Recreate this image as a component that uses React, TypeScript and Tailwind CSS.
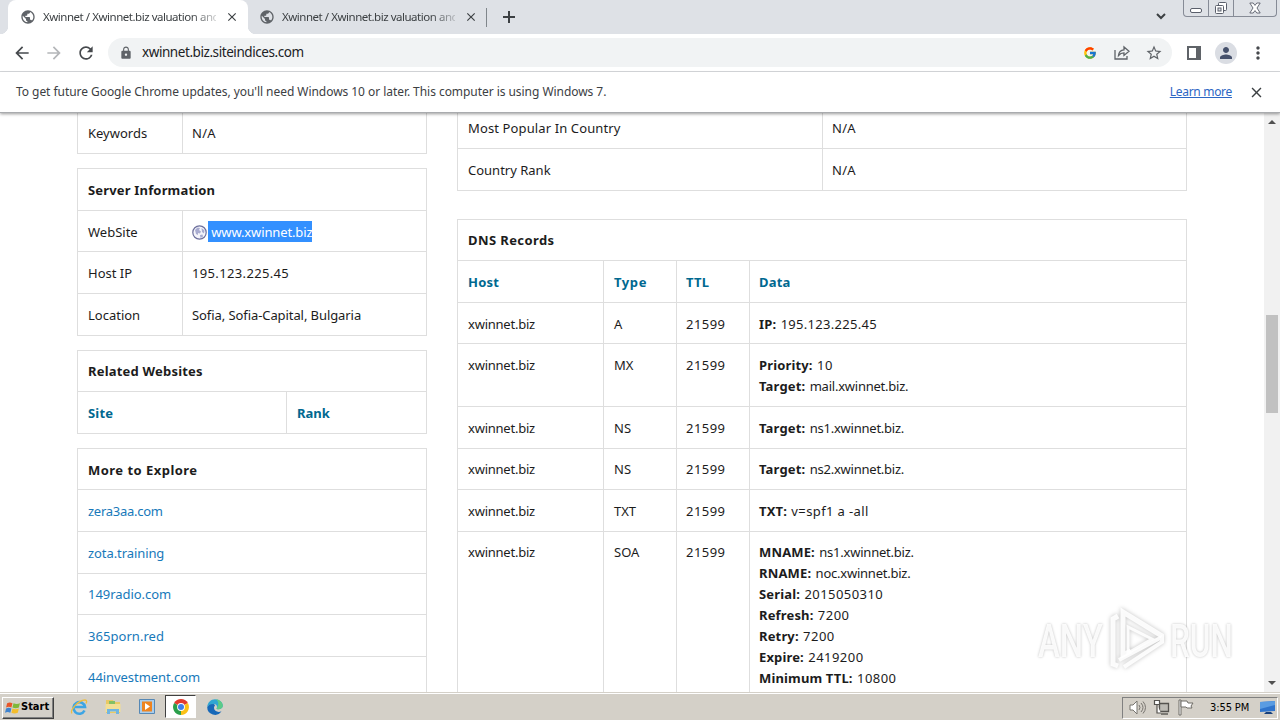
import type { ReactNode } from "react";
import clsx from "clsx";
import {
  MdArrowBack,
  MdArrowForward,
  MdClose,
  MdLock,
  MdMoreVert,
  MdPerson,
  MdPublic,
  MdRefresh,
  MdStarBorder,
} from "react-icons/md";
import { FcGoogle } from "react-icons/fc";

const TAB_TITLE = "Xwinnet / Xwinnet.biz valuation and";

// last row of each list runs below the fold
const EXPLORE = [
  { site: "zera3aa.com", row: "h-[42px] pt-[11px] tracking-[-0.27px]" },
  { site: "zota.training", row: "h-[42px] pt-[11px] tracking-[-0.08px]" },
  { site: "149radio.com", row: "h-[41px] pt-[10px] tracking-[-0.05px]" },
  { site: "365porn.red", row: "h-[42px] pt-[11px] tracking-[0.05px]" },
  { site: "44investment.com", row: "h-[42px] pt-[10px] tracking-[-0.06px]" },
];

const SERVER = [
  { label: "Host IP", value: "195.123.225.45", track: "tracking-[0.35px]" },
  { label: "Location", value: "Sofia, Sofia-Capital, Bulgaria", track: "tracking-[-0.08px]" },
];

const DIGITS = "tracking-[0.45px]";
const DOMAIN = "tracking-[-0.23px]";

const DNS = [
  { type: "A", h: "h-[41px]", pad: "pt-[11px]", data: [["IP:", "195.123.225.45", "tracking-[0.3px]"]] },
  {
    type: "MX",
    h: "h-[63px]",
    pad: "pt-[11px]",
    data: [
      ["Priority:", "10", DIGITS],
      ["Target:", "mail.xwinnet.biz.", DOMAIN],
    ],
  },
  { type: "NS", h: "h-[42px]", pad: "pt-[11px]", data: [["Target:", "ns1.xwinnet.biz.", DOMAIN]] },
  { type: "NS", h: "h-[41px]", pad: "pt-[10px]", data: [["Target:", "ns2.xwinnet.biz.", DOMAIN]] },
  { type: "TXT", h: "h-[42px]", pad: "pt-[11px]", data: [["TXT:", "v=spf1 a -all", "tracking-[0.38px]"]] },
  {
    type: "SOA",
    h: "h-[168px]",
    pad: "pt-[10px]",
    data: [
      ["MNAME:", "ns1.xwinnet.biz.", DOMAIN],
      ["RNAME:", "noc.xwinnet.biz.", DOMAIN],
      ["Serial:", "2015050310", DIGITS],
      ["Refresh:", "7200", DIGITS],
      ["Retry:", "7200", DIGITS],
      ["Expire:", "2419200", DIGITS],
      ["Minimum TTL:", "10800", DIGITS],
    ],
  },
];

function Tab({ active }: { active?: boolean }) {
  return (
    <div
      className={clsx(
        "relative flex h-full shrink-0 items-center",
        active ? "w-[240px] rounded-t-lg bg-white pl-3" : "w-[238px] pl-[11px]"
      )}
    >
      {active && (
        <>
          <span className="absolute -left-2 bottom-0 size-2 bg-[radial-gradient(circle_at_0_0,transparent_8px,white_8.5px)]" />
          <span className="absolute -right-2 bottom-0 size-2 bg-[radial-gradient(circle_at_100%_0,transparent_8px,white_8.5px)]" />
        </>
      )}
      <MdPublic className="size-4 text-[#5f6368]" />
      <span className="ml-[7px] w-[173px] whitespace-nowrap text-[11.5px] tracking-[-0.47px] text-[#3c4043] [mask-image:linear-gradient(to_right,black_148px,#0004_172px)]">
        {TAB_TITLE}
      </span>
      <MdClose className="ml-[9px] size-[14px] text-[#3c4043]" stroke="currentColor" />
    </div>
  );
}

function TabStrip() {
  return (
    <div className="relative flex h-[34px] bg-[#dee1e6] pl-2">
      <Tab active />
      <Tab />
      <div className="mt-2 h-[19px] w-px bg-[#80868b]" />
      <svg className="ml-4 mt-[11px] size-3" viewBox="0 0 12 12">
        <path d="M6 0v12M0 6h12" stroke="#3c4043" strokeWidth="2" />
      </svg>
      <svg className="ml-auto mr-[114px] mt-[13px] h-[7px] w-[10px]" viewBox="0 0 10 7">
        <path d="M1 1l4 4 4-4" fill="none" stroke="#3c4043" strokeWidth="2" />
      </svg>
      <div className="absolute right-[3px] top-0 flex h-[17px] w-[94px] rounded-b border border-t-0 border-[#868b96] text-[#5a5f6b]">
        <div className="w-[25px] border-r border-[#868b96] pl-[6px] pt-[8px]">
          <div className="h-[5px] w-3 rounded-[2px] border border-current bg-white" />
        </div>
        <div className="w-[25px] border-r border-[#868b96] pl-[5px] pt-[1px]">
          <svg className="size-[14px]" viewBox="0 0 14 14" fill="#fff" stroke="currentColor">
            <rect x="4.5" y="1.5" width="8" height="8" rx="1" />
            <rect x="1.5" y="4.5" width="8" height="8" rx="1" />
            <rect x="4" y="7" width="3" height="3" fill="#dee1e6" />
          </svg>
        </div>
        <svg className="ml-[15px] mt-[2px] h-[12px] w-[12px]" viewBox="0 0 12 12">
          <path
            d="M.8 1h3.4L6 3.4 7.800 1h3.400L8 6l3.200 5H7.800L6 8.600 4.200 11H.8L4 6z"
            fill="#fff"
            stroke="#5a5f6b"
            strokeWidth=".9"
          />
        </svg>
      </div>
    </div>
  );
}

function Toolbar() {
  return (
    <div className="flex h-[38px] items-center border-b border-[#d5d7da] bg-white pl-3 text-[#5f6368]">
      <MdArrowBack className="size-5 text-[#46494d]" />
      <MdArrowForward className="ml-3 size-5 text-[#b4b6b9]" />
      <MdRefresh className="ml-3 size-5 text-[#46494d]" />
      <div className="ml-3 flex h-[29px] w-[1064px] items-center rounded-full bg-[#f1f3f4] pl-[11px] pr-[9px]">
        <MdLock className="size-[14px]" />
        <span className="ml-[9px] text-[13.5px] tracking-[-0.43px] text-[#202124]">
          xwinnet.biz.siteindices.com
        </span>
        <FcGoogle className="ml-auto size-[14px]" />
        <svg className="ml-[17px] h-[15px] w-4" viewBox="0 0 16 15" fill="none" stroke="currentColor" strokeWidth="1.300">
          <path d="M1 5v9h12v-3" />
          <path d="M4.500 10.500c.3-3.500 2.200-5.500 5.500-5.700V2l5 4.200-5 4.200V7.800c-2.500 0-4 .8-5.500 2.700z" />
        </svg>
        <MdStarBorder className="ml-[15px] size-[18px]" />
      </div>
      <svg className="ml-[15px] size-[14px]" viewBox="0 0 14 14">
        <rect x="1" y="1" width="12" height="12" fill="none" stroke="#5f6368" strokeWidth="2" />
        <path d="M9 1h4v12H9z" fill="#5f6368" />
      </svg>
      <div className="ml-[14px] flex size-[22px] items-center justify-center rounded-full bg-[#dadde3]">
        <MdPerson className="size-[18px] text-[#45506b]" />
      </div>
      <MdMoreVert className="ml-[11px] size-5 text-[#46494d]" />
    </div>
  );
}

function InfoBar() {
  return (
    <div className="relative z-10 flex h-10 items-center bg-white pl-4 pr-[15px] text-[12px] text-[#3c4043] shadow-[0_1px_0_#a9abae,0_2px_3px_#0006]">
      <span className="tracking-[-0.05px]">
        To get future Google Chrome updates, you'll need Windows 10 or later. This computer is using Windows 7.
      </span>
      <span className="ml-auto tracking-[-0.3px] text-[#2c66c4] underline">Learn more</span>
      <MdClose className="ml-[16px] size-[17px]" />
    </div>
  );
}

function Title({ children, className }: { children: ReactNode; className: string }) {
  return (
    <div className={clsx("border-b border-[#dedede] pl-[10px] font-bold", className)}>
      {children}
    </div>
  );
}

function Panel({ children, className }: { children: ReactNode; className?: string }) {
  return <div className={clsx("border border-b-0 border-[#dedede]", className)}>{children}</div>;
}

const CELL = "border-r border-[#dedede] pl-[10px]";

function LeftColumn() {
  return (
    <div className="w-[350px]">
      <Panel className="border-t-0">
        <div className="flex h-[41px] border-b border-[#dedede]">
          <div className={clsx(CELL, "w-[105px] pt-[10px]")}>Keywords</div>
          <div className="pl-[9px] pt-[10px] tracking-[0.3px]">N/A</div>
        </div>
      </Panel>

      <Panel className="mt-[14px]">
        <Title className="h-[42px] pt-[11px] tracking-[0.17px]">Server Information</Title>
        <div className="flex h-[41px] border-b border-[#dedede]">
          <div className={clsx(CELL, "w-[105px] pt-[11px]")}>WebSite</div>
          <div className="flex pl-[9px] pt-[10px]">
            <svg className="mr-px mt-[4px] size-[15px]" viewBox="0 0 15 15">
              <circle cx="7.500" cy="7.500" r="6.700" fill="#f4f4fa" stroke="#6c6f9c" strokeWidth="1.200" />
              <path d="M3 5l2.500-2.500L8 3 7 5l2 1.500-1 2-2-.5v2L4 9zM9.500 3l3 2.500-.5 3-2-1.500zM8 10l2.500-.5.5 2-2.500 1.500z" fill="#a9acd0" />
            </svg>
            <span className="h-[21px] w-[104px] whitespace-pre bg-[#3390ff] leading-[23px] tracking-[-0.13px] text-white"> www.xwinnet.biz</span>
          </div>
        </div>
        {SERVER.map((r) => (
          <div key={r.label} className="flex h-[42px] border-b border-[#dedede]">
            <div className={clsx(CELL, "w-[105px] pt-[11px]")}>{r.label}</div>
            <div className={clsx("pl-[9px] pt-[11px]", r.track)}>{r.value}</div>
          </div>
        ))}
      </Panel>

      <Panel className="mt-[14px]">
        <Title className="h-[41px] pt-[10px] tracking-[0.2px]">Related Websites</Title>
        <div className="flex h-[42px] border-b border-[#dedede] font-bold text-[#006890]">
          <div className={clsx(CELL, "w-[209px] pt-[11px] tracking-[0.2px]")}>Site</div>
          <div className="pl-[10px] pt-[11px]">Rank</div>
        </div>
      </Panel>

      <Panel className="mt-[14px]">
        <Title className="h-[41px] pt-[11px] tracking-[0.47px]">More to Explore</Title>
        {EXPLORE.map((r) => (
          <div key={r.site} className={clsx("border-b border-[#dedede] pl-[10px] text-[#1779ba]", r.row)}>
            {r.site}
          </div>
        ))}
      </Panel>
    </div>
  );
}

function RightColumn() {
  return (
    <div className="w-[730px]">
      <Panel className="border-t-0">
        <div className="flex h-[36px] border-b border-[#dedede]">
          <div className={clsx(CELL, "w-[365px] pt-[5px] tracking-[0.12px]")}>Most Popular In Country</div>
          <div className="pl-[9px] pt-[5px] tracking-[0.3px]">N/A</div>
        </div>
        <div className="flex h-[42px] border-b border-[#dedede]">
          <div className={clsx(CELL, "w-[365px] pt-[11px]")}>Country Rank</div>
          <div className="pl-[9px] pt-[11px] tracking-[0.3px]">N/A</div>
        </div>
      </Panel>

      <Panel className="mt-[28px]">
        <Title className="h-[41px] pt-[10px] tracking-[0.4px]">DNS Records</Title>
        <div className="flex h-[42px] border-b border-[#dedede] font-bold tracking-[0.2px] text-[#006890]">
          <div className={clsx(CELL, "w-[146px] pt-[11px]")}>Host</div>
          <div className={clsx(CELL, "w-[73px] pt-[11px] tracking-[0.6px]")}>Type</div>
          <div className="w-[73px] border-r border-[#dedede] pl-[9px] pt-[11px]">TTL</div>
          <div className="pl-[9px] pt-[11px]">Data</div>
        </div>
        {DNS.map((r, i) => (
          <div key={i} className={clsx("flex border-b border-[#dedede]", r.h)}>
            <div className={clsx(CELL, "w-[146px]", r.pad, DOMAIN)}>xwinnet.biz</div>
            <div className={clsx(CELL, "w-[73px]", r.pad)}>{r.type}</div>
            <div className={clsx("w-[73px] border-r border-[#dedede] pl-[9px]", r.pad, DIGITS)}>21599</div>
            <div className={clsx("pl-[9px]", r.pad)}>
              {r.data.map(([k, v, track]) => (
                <div key={k}>
                  <b className="mr-px tracking-[0.15px]">{k}</b> <span className={track}>{v}</span>
                </div>
              ))}
            </div>
          </div>
        ))}
      </Panel>
    </div>
  );
}

function Scrollbar() {
  return (
    <div className="ml-auto flex w-4 flex-col items-center bg-[#f1f1f1] pb-[7px] pt-[8px]">
      <div className="border-x-4 border-b-4 border-x-transparent border-b-[#505050]" />
      <div className="mt-[191px] h-[98px] w-3 bg-[#c1c1c1]" />
      <div className="mt-auto border-x-4 border-t-4 border-x-transparent border-t-[#505050]" />
    </div>
  );
}

function Watermark() {
  return (
    <div className="absolute left-[1038px] top-[607px] flex h-[66px] w-[196px] items-center justify-between font-[Roboto] text-[47px] font-medium leading-none text-white/90 [text-shadow:0_0_3px_#0004]">
      <span className="w-[64px] origin-left scale-x-[0.700]">ANY</span>
      <svg className="ml-[4px] h-[66px] w-[60px] drop-shadow-[0_0_2px_#0004]" viewBox="0 0 60 66" fill="none" stroke="#fff" strokeWidth="5" strokeOpacity=".9">
        <path d="M10 9L5 12v45l5 2" />
        <path d="M54 29L15 5v43l8-4" />
        <path d="M20 20v26l24-14z" strokeWidth="3" />
        <path d="M11 53l43-23v5L16 60" strokeWidth="4" />
      </svg>
      <span className="w-[64px] origin-left scale-x-[0.670]">RUN</span>
    </div>
  );
}

function Taskbar() {
  return (
    <div className="relative flex h-7 items-center border-t border-[#d4d0c8] bg-[#d4d0c8] pl-[2px] font-['DejaVu_Sans_Condensed',sans-serif] shadow-[inset_0_1px_0_#fff]">
      <div className="mt-[2px] flex h-[22px] w-[52px] items-center border border-b-[#404040] border-l-white border-r-[#404040] border-t-white pl-[2px] text-[11px] font-bold text-black shadow-[inset_-1px_-1px_0_#808080]">
        <svg className="size-4" viewBox="0 0 15 15">
          <path d="M2 3c2-1 3-1 5 0L6 7C4 6 3 6 1 7z" fill="#e8562a" />
          <path d="M8 3c2 1 4 1 6 0l-1 4c-2 1-4 1-6 0z" fill="#7fb83a" />
          <path d="M1 8c2-1 3-1 5 0l-1 4c-2-1-3-1-5 0z" fill="#3f83cf" />
          <path d="M7 8c2 1 4 1 6 0l-1 4c-2 1-4 1-6 0z" fill="#f4bd2c" />
        </svg>
        <span>Start</span>
      </div>
      <svg className="ml-[16px] size-[18px]" viewBox="0 0 18 18" fill="none">
        <path d="M14.500 12.500A5.800 5.800 0 1 1 15 9H5" stroke="#3da5e4" strokeWidth="2.600" />
        <path d="M2 15.500C-1 13 8 2 15 2c2 0 2 2 1 3.500" stroke="#edbd3e" strokeWidth="1.300" />
      </svg>
      <svg className="ml-[16px] size-[18px]" viewBox="0 0 18 18">
        <path d="M2 2h7l1 2h6v11H2z" fill="#e9c964" />
        <path d="M5 3h6v4H5z" fill="#83bf65" />
        <path d="M1.500 6h15v8h-15z" fill="#f3df95" />
        <path d="M3 16v-5h12v5h-3v-2.500H6V16z" fill="#70b5e1" />
      </svg>
      <svg className="ml-[17px] size-[17px]" viewBox="0 0 17 17">
        <path d="M.5 1.500h15v14H.5z" fill="#a9cdec" stroke="#5688b5" />
        <path d="M3 3.500h10v10H3z" fill="#ee8420" />
        <path d="M6 5v7l5-3.500z" fill="#fff" />
      </svg>
      <div className="ml-[9px] flex h-[23px] w-[31px] items-center justify-center border border-b-white border-l-[#404040] border-r-white border-t-[#404040] bg-white">
        <svg className="size-4" viewBox="0 0 16 16">
          <path d="M8 8L1.100 4A8 8 0 0 1 14.900 4z" fill="#e33b2e" />
          <path d="M8 8l6.900-4A8 8 0 0 1 8 16z" fill="#fbc116" />
          <path d="M8 8v8A8 8 0 0 1 1.100 4z" fill="#2b9f4b" />
          <circle cx="8" cy="8" r="3.900" fill="#fff" />
          <circle cx="8" cy="8" r="3" fill="#3f7fea" />
        </svg>
      </div>
      <svg className="ml-[11px] size-4" viewBox="0 0 16 16">
        <path d="M.2 8a7.800 7.800 0 0 0 14.300 4.300C11 14 7 12 7 9c0-2 1-2 1-3L4 3z" fill="#1768b8" />
        <path d="M.2 8C.5 3.500 4 .2 8 .2c4.500 0 7.800 3 7.800 6.500 0 3-4 4.300-6.300 3C11 7 9 5 6.500 5 3.500 5 1 6 .2 8z" fill="#2fa6d2" />
        <path d="M9 .3c4 .4 6.800 3.400 6.800 6.400 0 3-4 4.300-6.300 3C12 6 12 3 9 .3z" fill="#5ccb87" />
      </svg>

      <div className="ml-auto mr-[2px] mt-[2px] flex h-[22px] w-[156px] items-center border border-b-white border-l-[#808080] border-r-white border-t-[#808080] pl-[6px]">
        <svg className="size-[17px]" viewBox="0 0 17 17" fill="#fff" stroke="#77746f">
          <path d="M1 6h3l4-4v13l-4-4H1z" />
          <path d="M10 6q2 2.500 0 5M12 4q4 4.500 0 9M14 2.500q5 6 0 12" fill="none" />
        </svg>
        <svg className="ml-[7px] size-[17px]" viewBox="0 0 17 17" fill="#fff" stroke="#55534f">
          <path d="M6.500 4.500h9v8h-9z" fill="#bdbbb5" strokeWidth="1.300" />
          <path d="M1.500 1.500h5v4h-5zM4 6v8h4" strokeWidth="1.200" />
          <path d="M8 15h7" strokeWidth="1.400" />
        </svg>
        <svg className="ml-[8px] size-[17px]" viewBox="0 0 17 17" fill="#fff" stroke="#6f6c66">
          <path d="M1 1h2v15H1z" />
          <path d="M3 2h6l1 2h5l-2 3 1 2H9L8 8H3z" />
        </svg>
        <span className="ml-[15px] whitespace-nowrap pt-px text-[11px] tracking-[-0.1px] text-black">3:55 PM</span>
        <svg className="ml-auto mr-[1px] h-[14px] w-4" viewBox="0 0 16 14">
          <path d="M0 1l15-1v10L0 11z" fill="#2f74cc" />
          <path d="M0 1l15-1v4L0 8z" fill="#5a9ce2" />
          <path d="M6 11h5l2 2H4z" fill="#17407c" />
        </svg>
      </div>
    </div>
  );
}

export default function App() {
  return (
    <div className="relative flex h-[720px] w-[1280px] flex-col overflow-hidden bg-white font-['Noto_Sans','Open_Sans',sans-serif]">
      <TabStrip />
      <Toolbar />
      <InfoBar />
      <div className="flex h-[580px] overflow-hidden pl-[77px] pt-px text-[13px] leading-[21px] text-[#1c1c1c]">
        <LeftColumn />
        <div className="w-[30px]" />
        <RightColumn />
        <div className="-mt-px ml-auto flex h-[580px]">
          <Scrollbar />
        </div>
      </div>
      <Watermark />
      <Taskbar />
    </div>
  );
}
